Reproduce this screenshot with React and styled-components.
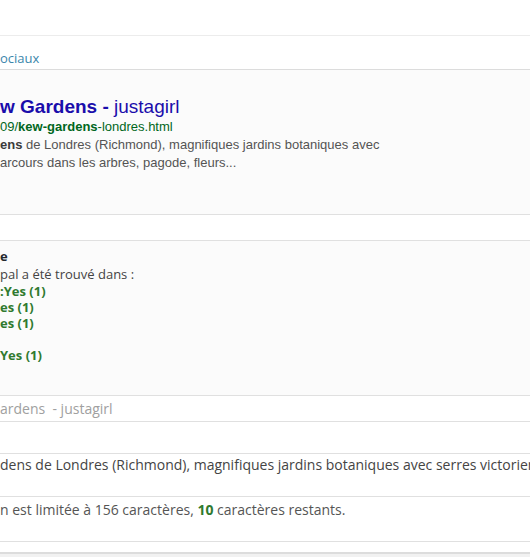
import React from 'react'
import styled, { createGlobalStyle } from 'styled-components'

const GlobalStyle = createGlobalStyle`
  body {
    margin: 0;
    background: #fff;
    font-family: "Open Sans", "Liberation Sans", sans-serif;
    font-size: 13px;
    color: #444;
  }
`

const Page = styled.div`
  width: 530px;
  min-height: 557px;
  background: #f1f1f1;
  overflow: hidden;
`

const Panel = styled.div`
  background: #fff;
  border-bottom: 1px solid #dcdcdc;
`

const Block = styled.div`
  height: ${p => p.h}px;
  box-sizing: border-box;
  background: ${p => (p.shade ? '#fbfbfb' : '#fff')};
  border-bottom: 1px solid ${p => p.line || '#e0e0e0'};
  padding-top: ${p => p.pt || 0}px;
  white-space: nowrap;
  overflow: hidden;
`

const TabLink = styled.span`
  display: block;
  line-height: 18px;
  color: #3a86ab;
  font-size: 13px;
`

const SnippetTitle = styled.div`
  font-family: "Liberation Sans", Arial, sans-serif;
  font-size: 19px;
  line-height: 22px;
  color: #1a0dab;

  b {
    font-weight: bold;
  }
`

const SnippetUrl = styled.div`
  font-family: "Liberation Sans", Arial, sans-serif;
  font-size: 13px;
  line-height: 18px;
  color: #006621;
`

const SnippetDesc = styled.div`
  font-family: "Liberation Sans", Arial, sans-serif;
  font-size: 13px;
  line-height: 18px;
  color: #545454;

  b {
    color: #3a3a3a;
  }
`

const Label = styled.div`
  font-weight: 700;
  line-height: 18px;
  color: #23282d;
`

const Line = styled.div`
  line-height: ${p => p.lh || 18}px;
  height: ${p => p.lh || 18}px;
`

const Good = styled.span`
  color: #2f7a2f;
  font-weight: 700;
`

const Field = styled.div`
  font-size: 14px;
  line-height: ${p => p.lh}px;
  color: ${p => p.muted ? '#a0a0a0' : '#444'};
`

const Counter = styled.div`
  font-size: 14px;
  line-height: 18px;
  color: #555;
`

export default function App() {
  return (
    <Page>
      <GlobalStyle />
      <Panel>
        <Block h={36} line="#ececec" />
        <Block h={34} pt={13} line="#dcdcdc">
          <TabLink>ociaux</TabLink>
        </Block>
        <Block h={145} pt={26} shade>
          <SnippetTitle>
            <b>w Gardens -</b> justagirl
          </SnippetTitle>
          <SnippetUrl>
            09/<b>kew-gardens</b>-londres.html
          </SnippetUrl>
          <SnippetDesc>
            <b>ens</b> de Londres (Richmond), magnifiques jardins botaniques avec
          </SnippetDesc>
          <SnippetDesc>arcours dans les arbres, pagode, fleurs...</SnippetDesc>
        </Block>
        <Block h={26} />
        <Block h={155} pt={6} shade>
          <Label>e</Label>
          <Line>pal a été trouvé dans :</Line>
          <Line lh={16}><Good>:Yes (1)</Good></Line>
          <Line lh={16}><Good>es (1)</Good></Line>
          <Line lh={16}><Good>es (1)</Good></Line>
          <Line lh={16} />
          <Line lh={16}><Good>Yes (1)</Good></Line>
        </Block>
        <Block h={26}>
          <Field muted lh={25}>ardens&nbsp; - justagirl</Field>
        </Block>
        <Block h={32} />
        <Block h={43} pt={2}>
          <Field lh={18}>dens de Londres (Richmond), magnifiques jardins botaniques avec serres victoriennes</Field>
        </Block>
        <Block h={45} pt={4}>
          <Counter>
            n est limitée à 156 caractères, <Good>10</Good> caractères restants.
          </Counter>
        </Block>
        <Block h={11} line="#dcdcdc" />
      </Panel>
    </Page>
  )
}
